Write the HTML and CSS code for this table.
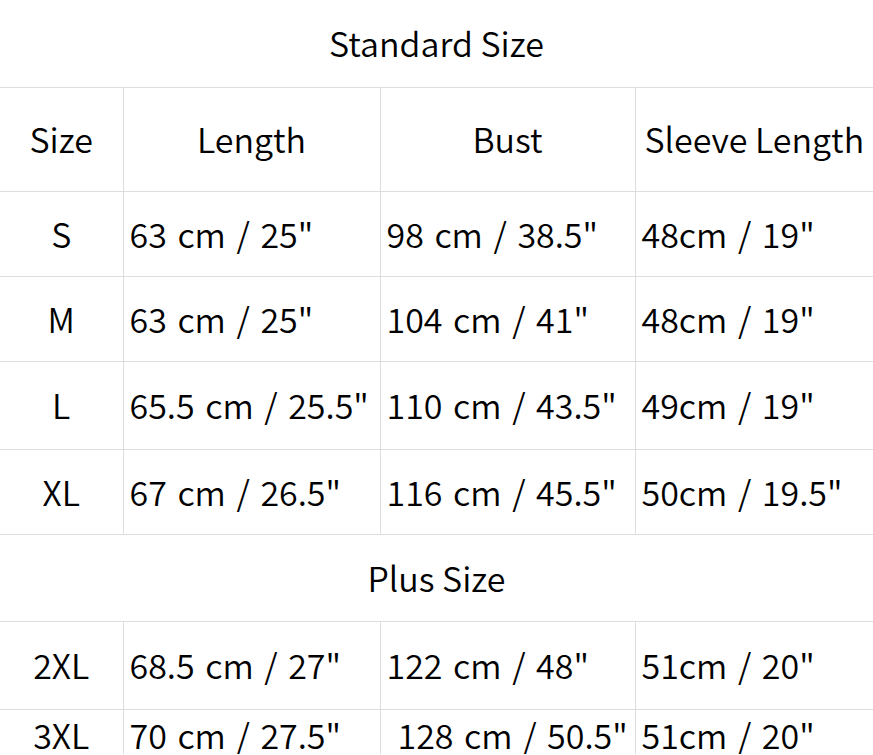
FILE: index.html
```html
<!DOCTYPE html>
<html>
<head>
<meta charset="utf-8">
<link rel="stylesheet" href="styles.css">
</head>
<body>
<table class="sizes">
  <colgroup>
    <col class="c-size">
    <col class="c-len">
    <col class="c-bust">
    <col class="c-sleeve">
  </colgroup>
  <tr class="r-title"><td colspan="4" class="title">Standard Size</td></tr>
  <tr class="r-head">
    <td class="head">Size</td>
    <td class="head">Length</td>
    <td class="head">Bust</td>
    <td class="head">Sleeve Length</td>
  </tr>
  <tr class="r-data"><td class="sz">S</td><td>63 cm / 25"</td><td>98 cm / 38.5"</td><td>48cm / 19"</td></tr>
  <tr class="r-data"><td class="sz">M</td><td>63 cm / 25"</td><td>104 cm / 41"</td><td>48cm / 19"</td></tr>
  <tr class="r-data tall"><td class="sz">L</td><td>65.5 cm / 25.5"</td><td>110 cm / 43.5"</td><td>49cm / 19"</td></tr>
  <tr class="r-data"><td class="sz">XL</td><td>67 cm / 26.5"</td><td>116 cm / 45.5"</td><td>50cm / 19.5"</td></tr>
  <tr class="r-title2"><td colspan="4" class="title">Plus Size</td></tr>
  <tr class="r-data tall"><td class="sz">2XL</td><td>68.5 cm / 27"</td><td>122 cm / 48"</td><td>51cm / 20"</td></tr>
  <tr class="r-last"><td class="sz">3XL</td><td>70 cm / 27.5"</td><td class="indent">128 cm / 50.5"</td><td>51cm / 20"</td></tr>
</table>
</body>
</html>
```

FILE: styles.css
```css
html, body {
  margin: 0;
  padding: 0;
  background: #ffffff;
}

body {
  font-family: "Noto Sans CJK SC", "Liberation Sans", sans-serif;
  font-weight: 350;
  color: #000000;
  overflow: hidden;
}

.sizes {
  width: 873px;
  table-layout: fixed;
  border-collapse: collapse;
  font-size: 34px;
}

.c-size { width: 123px; }
.c-len { width: 257px; }
.c-bust { width: 255px; }
.c-sleeve { width: 238px; }

.sizes td {
  border: 1px solid #dedede;
  padding: 0 0 0 6px;
  vertical-align: middle;
  white-space: nowrap;
  line-height: 1.2;
  word-spacing: 3px;
}

.sizes tr td:first-child { border-left: none; }
.sizes tr td:last-child { border-right: none; }

.sizes td.title {
  text-align: center;
  padding: 0;
  word-spacing: 0;
}

.sizes td.head,
.sizes td.sz {
  text-align: center;
  padding: 0;
  word-spacing: 0;
}

.sizes td.indent { padding-left: 17px; }

.r-title td { border-top: none; height: 87px; }
.r-head td { height: 103px; }
.r-data td { height: 84px; }
.r-data.tall td { height: 87px; }
.r-title2 td { height: 86px; }

.sizes .r-last td {
  vertical-align: top;
  padding-top: 8px;
  height: 36px;
  line-height: 1;
  border-bottom: none;
}
.sizes .r-last td.indent { padding-left: 17px; }
.sizes .r-last td.sz { padding-left: 0; }
```
